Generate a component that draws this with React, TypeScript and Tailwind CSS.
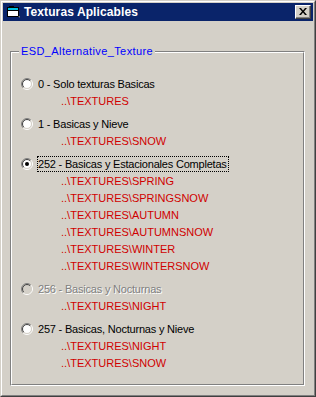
import React from "react";

const font = { fontFamily: '"Liberation Sans", Arial, sans-serif' };

function Radio({ checked = false, disabled = false }: { checked?: boolean; disabled?: boolean }) {
  const r1 = 5.5;
  const r2 = 4.5;
  const d1 = r1 / Math.SQRT2;
  const d2 = r2 / Math.SQRT2;
  return (
    <svg width="12" height="12" viewBox="0 0 12 12" className="shrink-0">
      <circle cx="6" cy="6" r="4.5" fill={disabled ? "#d4d0c8" : "#ffffff"} />
      <path d={`M ${6 - d1} ${6 + d1} A ${r1} ${r1} 0 0 1 ${6 + d1} ${6 - d1}`} stroke="#808080" fill="none" strokeWidth="1" />
      <path d={`M ${6 + d1} ${6 - d1} A ${r1} ${r1} 0 0 1 ${6 - d1} ${6 + d1}`} stroke="#ffffff" fill="none" strokeWidth="1" />
      <path d={`M ${6 - d2} ${6 + d2} A ${r2} ${r2} 0 0 1 ${6 + d2} ${6 - d2}`} stroke="#404040" fill="none" strokeWidth="1" />
      <path d={`M ${6 + d2} ${6 - d2} A ${r2} ${r2} 0 0 1 ${6 - d2} ${6 + d2}`} stroke="#d4d0c8" fill="none" strokeWidth="1" />
      {checked && <circle cx="6" cy="6" r="2" fill="#000000" />}
    </svg>
  );
}

type Opt = { label: string; paths: string[]; checked?: boolean; disabled?: boolean };

const options: Opt[] = [
  { label: "0 - Solo texturas Basicas", paths: ["..\\TEXTURES"] },
  { label: "1 - Basicas y Nieve", paths: ["..\\TEXTURES\\SNOW"] },
  {
    label: "252 - Basicas y Estacionales Completas",
    checked: true,
    paths: [
      "..\\TEXTURES\\SPRING",
      "..\\TEXTURES\\SPRINGSNOW",
      "..\\TEXTURES\\AUTUMN",
      "..\\TEXTURES\\AUTUMNSNOW",
      "..\\TEXTURES\\WINTER",
      "..\\TEXTURES\\WINTERSNOW",
    ],
  },
  { label: "256 - Basicas y Nocturnas", disabled: true, paths: ["..\\TEXTURES\\NIGHT"] },
  { label: "257 - Basicas, Nocturnas y Nieve", paths: ["..\\TEXTURES\\NIGHT", "..\\TEXTURES\\SNOW"] },
];

export default function App() {
  return (
    <div className="w-[316px] h-[397px] bg-[#d4d0c8] text-[11px] leading-none" style={font}>
      <div className="w-full h-full border-t border-l border-t-[#d4d0c8] border-l-[#d4d0c8] border-r border-b border-r-[#404040] border-b-[#404040]">
        <div className="w-full h-full border-t border-l border-t-white border-l-white border-r border-b border-r-[#808080] border-b-[#808080] p-[1px] flex flex-col">
          {/* Title bar */}
          <div className="h-[18px] bg-[#0a246a] flex items-center shrink-0">
            <svg width="16" height="16" viewBox="0 0 16 16" className="ml-[2px] shrink-0">
              <rect x="2.5" y="3.5" width="11" height="9" fill="#ffffff" stroke="#000000" />
              <rect x="3" y="4" width="10" height="2" fill="#00c0e0" />
              <line x1="2.5" y1="6.5" x2="13.5" y2="6.5" stroke="#000000" />
              <rect x="4" y="2" width="5" height="1.5" fill="#000000" />
              <path d="M13 12 L15 12 L15 14 Z" fill="#808080" />
            </svg>
            <span className="ml-[3px] text-white font-bold text-[12px] tracking-[0.1px]">Texturas Aplicables</span>
            <div className="ml-auto mr-[2px] w-[16px] h-[14px] border-t border-l border-t-white border-l-white border-r border-b border-r-[#404040] border-b-[#404040]">
              <div className="w-full h-full bg-[#d4d0c8] border-r border-b border-r-[#808080] border-b-[#808080] flex items-center justify-center">
                <svg width="8" height="7" viewBox="0 0 8 7">
                  <path d="M0 0 H2 L4 2.5 L6 0 H8 L5 3.5 L8 7 H6 L4 4.5 L2 7 H0 L3 3.5 Z" fill="#000000" />
                </svg>
              </div>
            </div>
          </div>

          {/* Body */}
          <div className="pl-[7px] pt-[30px]">
            <div className="relative w-[295px] h-[335px] border-t border-l border-t-[#808080] border-l-[#808080] border-r border-b border-r-white border-b-white">
              <div className="w-full h-full border-t border-l border-t-white border-l-white border-r border-b border-r-[#808080] border-b-[#808080] pt-[22px] pl-[9px] flex flex-col gap-[5px]">
                {options.map((o) => (
                  <div key={o.label} className="flex flex-col">
                    <div className="h-[18px] flex items-center">
                      <Radio checked={o.checked} disabled={o.disabled} />
                      <span
                        className={
                          "ml-[4px] pr-[1px] h-[16px] flex items-center border tracking-[-0.2px] " +
                          (o.checked ? "border-dotted border-black" : "border-transparent") +
                          (o.disabled ? " text-[#808080] [text-shadow:1px_1px_0_#ffffff]" : " text-black")
                        }
                      >
                        {o.label}
                      </span>
                    </div>
                    {o.paths.map((p) => (
                      <div key={p} className="h-[17px] flex items-center pl-[40px] text-[#d00000]">
                        {p}
                      </div>
                    ))}
                  </div>
                ))}
              </div>
              <span className="absolute left-[8px] top-[-6px] px-[2px] bg-[#d4d0c8] text-[#0000ff] leading-[11px] tracking-[0.4px]">
                ESD_Alternative_Texture
              </span>
            </div>
          </div>
        </div>
      </div>
    </div>
  );
}
